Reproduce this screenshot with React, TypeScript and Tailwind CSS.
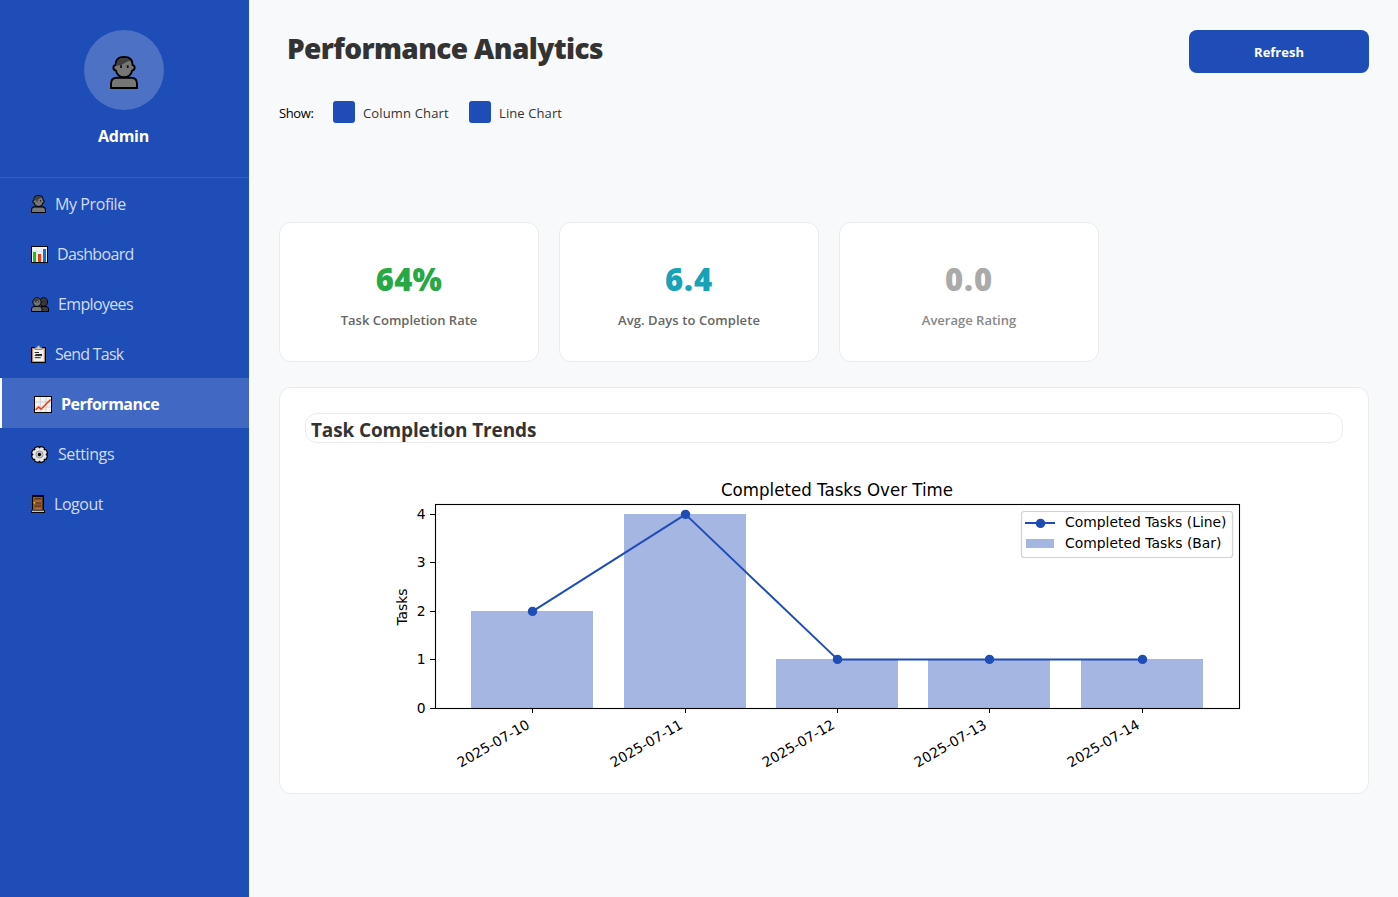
import type { ReactNode } from "react";

function PersonIcon({ className }: { className: string }) {
  return (
    <svg viewBox="0 0 28 33" preserveAspectRatio="none" className={className}>
      <path d="M1 32V27.5Q1 21.8 7 21.8H21Q27 21.8 27 27.5V32Z" fill="#767676" stroke="#000" strokeWidth="1.9" />
      <path d="M5.6 9Q5.6 1 14 1Q22.6 1 22.6 9Q24.6 9.4 24.6 11.8Q24.6 14.2 22.2 14.5Q20.5 21.3 14 21.3Q7.7 21.3 5.8 14.5Q3.4 14.2 3.4 11.8Q3.4 9.4 5.6 9Z" fill="#767676" stroke="#000" strokeWidth="1.9" />
      <path d="M6.5 9.5Q6.3 2 14 2Q18.5 2 20.5 4.6Q16.5 5.5 14 7.6Q11.5 9.8 6.5 9.5Z" fill="#3f3f3f" />
      <path d="M11 9.3V12M17.7 9.3V12" stroke="#111" strokeWidth="1.8" />
    </svg>
  );
}

function ChartBarIcon() {
  return (
    <svg viewBox="0 0 17 17" className="h-[17px] w-[17px]">
      <rect x=".5" y=".5" width="16" height="16" fill="#f3f3f3" stroke="#000" />
      <path d="M1 5.5H16M1 10.5H16M5.7 1V16M11 1V16" stroke="#dedede" strokeWidth=".7" />
      <rect x="2" y="6" width="3" height="10" fill="#16c60c" />
      <rect x="7" y="8" width="3" height="8" fill="#f03a17" />
      <rect x="12" y="3" width="3" height="13" fill="#0078d7" />
    </svg>
  );
}

function PeopleIcon() {
  return (
    <svg viewBox="0 0 18 15" className="h-[15px] w-[18px]">
      <path d="M9 14.5V10.8Q9 9.5 11 9.5H15Q17.5 9.5 17.5 12V14.5Z" fill="#3b3b3b" stroke="#000" />
      <ellipse cx="12.6" cy="4.9" rx="4" ry="4.3" fill="#3b3b3b" stroke="#000" />
      <path d="M.5 14.5V12Q.5 9.6 3 9.6H8.5Q11 9.6 11 12V14.5Z" fill="#767676" stroke="#000" />
      <ellipse cx="6" cy="5" rx="4.1" ry="4.4" fill="#767676" stroke="#000" />
      <path d="M2.4 4.2Q3 1 6 1Q8.5 1 9.3 3Q6 3.6 5.5 4.4Z" fill="#3f3f3f" />
      <path d="M4.8 4.5V5.7M7.6 4.5V5.7M12 4.5V5.7M14.5 4.5V5.7" stroke="#111" strokeWidth=".8" />
    </svg>
  );
}

function ClipboardIcon() {
  return (
    <svg viewBox="0 0 15 18" className="h-[18px] w-[15px]">
      <rect x=".5" y="2.5" width="14" height="15" fill="#b98a5e" stroke="#000" />
      <rect x="2.2" y="4" width="10.6" height="12.2" fill="#f2f2f2" />
      <path d="M4 4.5V2.5H5.8Q6 .6 7.5 .6Q9 .6 9.2 2.5H11V4.5Z" fill="#ccc" stroke="#777" strokeWidth=".8" />
      <path d="M3.8 7.5H8M4.5 9.5H11M3.8 10.6H11M3.8 12.7H9.8" stroke="#222" strokeWidth="1" />
    </svg>
  );
}

function TrendIcon() {
  return (
    <svg viewBox="0 0 18 17" className="h-[17px] w-[18px]">
      <rect x=".5" y=".5" width="17" height="16" fill="#f3f3f3" stroke="#000" />
      <path d="M1 6H17M1 11H17M6.3 1V16M12 1V16" stroke="#cfcfcf" strokeWidth=".9" />
      <path d="M1.6 13.8L4.6 11L7 13.2L16.6 3.5" fill="none" stroke="#f03a17" strokeWidth="1.6" />
    </svg>
  );
}

function GearIcon() {
  const teeth = [0, 45, 90, 135];
  return (
    <svg viewBox="0 0 17 17" className="h-[17px] w-[17px]">
      {teeth.map((a) => (
        <rect key={a} x="5.6" y="0" width="5.8" height="17" rx="1.4" fill="#000" transform={`rotate(${a + 22.5} 8.5 8.5)`} />
      ))}
      {teeth.map((a) => (
        <rect key={a} x="6.7" y="1.1" width="3.6" height="14.8" rx=".7" fill="#e8e8e8" transform={`rotate(${a + 22.5} 8.5 8.5)`} />
      ))}
      <circle cx="8.5" cy="8.5" r="6.2" fill="#e8e8e8" />
      <circle cx="8.5" cy="8.5" r="3.6" fill="#c4c4c4" stroke="#8c8c8c" strokeWidth=".8" />
      <circle cx="8.5" cy="8.5" r="1.7" fill="#000" />
    </svg>
  );
}

function DoorIcon() {
  return (
    <svg viewBox="0 0 14 18" className="h-[18px] w-[14px]">
      <path d="M1 0H13V18H1Z" fill="#000" />
      <rect x="2" y="2" width="9.6" height="13.5" fill="#8e562e" />
      <path d="M4 3.7H10M4 8H10M4 11H10" stroke="#5a3317" strokeWidth="1.2" />
      <path d="M4 6H10M4 13.4H10" stroke="#b97b4c" strokeWidth=".8" />
      <circle cx="3.4" cy="7.8" r=".9" fill="#f7c331" />
      <rect x="0" y="15" width="14" height="3" fill="#000" />
      <rect x=".8" y="15.6" width="12.2" height="1.4" fill="#c4c4c4" />
    </svg>
  );
}

type Item = { label: string; icon: ReactNode; gap: string; active?: boolean; tracking: string };

const items: Item[] = [
  { label: "My Profile", icon: <PersonIcon className="h-[18px] w-[15px]" />, gap: "gap-[9px]", tracking: "tracking-[-0.4px]" },
  { label: "Dashboard", icon: <ChartBarIcon />, gap: "gap-[9px]", tracking: "tracking-[-0.65px]" },
  { label: "Employees", icon: <PeopleIcon />, gap: "gap-[9px]", tracking: "tracking-[-0.65px]" },
  { label: "Send Task", icon: <ClipboardIcon />, gap: "gap-[9px]", tracking: "tracking-[-0.75px]" },
  { label: "Performance", icon: <TrendIcon />, gap: "gap-[9px]", active: true, tracking: "tracking-[-0.5px]" },
  { label: "Settings", icon: <GearIcon />, gap: "gap-[10px]", tracking: "tracking-[-0.4px]" },
  { label: "Logout", icon: <DoorIcon />, gap: "gap-[9px]", tracking: "tracking-[-0.45px]" },
];

function Sidebar() {
  return (
    <aside className="flex w-[249px] shrink-0 flex-col bg-[#1f4db7] text-white">
      <div className="flex h-[178px] flex-col items-center border-b border-[#3560be] pt-[30px] pr-[2px]">
        <div className="flex h-20 w-20 items-center justify-center rounded-full bg-[#4c71c5] pt-[5px]">
          <PersonIcon className="h-[33px] w-[28px]" />
        </div>
        <div className="mt-[14px] text-[16px] leading-6 font-bold tracking-[-0.3px]">Admin</div>
      </div>
      <nav className="flex flex-col">
        {items.map((it) => (
          <a
            key={it.label}
            className={
              it.active
                ? `flex h-[50px] items-center border-l-2 border-white bg-[#4168c2] pt-[2px] pl-8 text-[16px] font-bold text-white ${it.gap}`
                : `flex h-[50px] items-center pt-[2px] pl-[31px] text-[16px] text-[#d2dbf1] ${it.gap}`
            }
          >
            {it.icon}
            <span className={it.tracking}>{it.label}</span>
          </a>
        ))}
      </nav>
    </aside>
  );
}

const stats = [
  { value: "64%", label: "Task Completion Rate", valueColor: "text-[#28a745] tracking-[0.2px]", labelColor: "text-[#666666]" },
  { value: "6.4", label: "Avg. Days to Complete", valueColor: "text-[#17a2b8] tracking-[0.9px]", labelColor: "text-[#666666] tracking-[0.08px]" },
  { value: "0.0", label: "Average Rating", valueColor: "text-[#aaaaaa] tracking-[0.9px]", labelColor: "text-[#888888]" },
];

const points = [
  { date: "2025-07-10", x: 532.5, left: 471, y: 611 },
  { date: "2025-07-11", x: 685.5, left: 624, y: 514 },
  { date: "2025-07-12", x: 837.5, left: 776, y: 659 },
  { date: "2025-07-13", x: 989.5, left: 928, y: 659 },
  { date: "2025-07-14", x: 1142.5, left: 1081, y: 659 },
];

const yTicks = [708.5, 659.5, 611.5, 562.5, 514.5];

function TrendChart() {
  return (
    <svg viewBox="305 463 1038 305" className="mt-5 h-[305px] w-[1038px] overflow-visible font-['DejaVu_Sans',sans-serif] text-[13.89px]">
      <text x="721" y="495.6" className="text-[17.2px]" textLength="232" lengthAdjust="spacingAndGlyphs">Completed Tasks Over Time</text>
      {points.map((p) => (
        <rect key={p.date} x={p.left} y={p.y} width="122" height={708 - p.y} fill="#a6b6e2" />
      ))}
      {yTicks.map((y, i) => (
        <g key={y}>
          <path d={`M430 ${y}H435`} stroke="#000" />
          <text x="425.5" y={y + 4.4} textAnchor="end">{i}</text>
        </g>
      ))}
      {points.map((p) => (
        <g key={p.date}>
          <path d={`M${p.x} 708V713`} stroke="#000" />
          <text textAnchor="end" transform={`translate(${p.x - 1.8} 727.5) rotate(-30)`}>{p.date}</text>
        </g>
      ))}
      <text textAnchor="middle" transform="translate(407 607) rotate(-90)">Tasks</text>
      <polyline points={points.map((p) => `${p.x},${p.y + 0.4}`).join(" ")} fill="none" stroke="#1f4db7" strokeWidth="2" strokeLinejoin="round" />
      {points.map((p) => (
        <circle key={p.date} cx={p.x} cy={p.y + 0.4} r="4.7" fill="#1f4db7" />
      ))}
      <rect x="435.5" y="504.5" width="804" height="204" fill="none" stroke="#000" strokeWidth="1.1" />
      <rect x="1021.5" y="511.5" width="211" height="46" rx="2.8" fill="#fff" stroke="#d2d2d2" strokeWidth="1.2" />
      <path d="M1025 523H1055" stroke="#1f4db7" strokeWidth="2" />
      <circle cx="1040.5" cy="523.4" r="4.7" fill="#1f4db7" />
      <rect x="1026" y="539" width="28" height="9" fill="#a6b6e2" />
      <text x="1065" y="527" textLength="161.5">Completed Tasks (Line)</text>
      <text x="1065" y="548" textLength="156.5">Completed Tasks (Bar)</text>
    </svg>
  );
}

export default function App() {
  return (
    <div className="flex h-[897px] w-[1398px] overflow-hidden bg-[#f8f9fb] font-['Open_Sans','Noto_Sans',sans-serif]">
      <Sidebar />
      <main className="flex flex-1 flex-col px-[30px] pt-[30px]">
        <header className="flex h-[43px] w-[1090px] items-start justify-between">
          <h1 className="pl-2 text-[28px] leading-[37px] font-extrabold tracking-[-0.62px] whitespace-nowrap text-[#333]">Performance Analytics</h1>
          <button className="h-[43px] w-[180px] rounded-lg bg-[#1f4db7] pt-[2px] text-[13px] font-bold text-white">Refresh</button>
        </header>
        <div className="mt-7 flex h-[22px] items-center text-[13px]">
          <span className="w-[54px] pt-[3px] tracking-[-0.4px] text-black">Show:</span>
          <span className="h-[22px] w-[22px] rounded-[3px] bg-[#1f4db7]" />
          <span className="ml-2 w-[106px] pt-[3px] tracking-[0.15px] text-[#333]">Column Chart</span>
          <span className="h-[22px] w-[22px] rounded-[3px] bg-[#1f4db7]" />
          <span className="ml-2 pt-[3px] tracking-[0.1px] text-[#333]">Line Chart</span>
        </div>
        <section className="mt-[99px] flex gap-5">
          {stats.map((s) => (
            <div key={s.label} className="flex h-[140px] w-[260px] flex-col items-center rounded-xl border border-[#e9ecef] bg-white pt-[36px]">
              <div className={`text-[31px] leading-[40px] font-extrabold ${s.valueColor}`}>{s.value}</div>
              <div className={`mt-[11px] text-[13px] leading-5 font-semibold ${s.labelColor}`}>{s.label}</div>
            </div>
          ))}
        </section>
        <section className="mt-[25px] h-[407px] w-[1090px] rounded-xl border border-[#e9ecef] bg-white p-[25px]">
          <div className="h-[30px] rounded-xl border border-[#e9ecef] pl-[5px]">
            <h2 className="text-[19px] leading-[32px] font-bold tracking-[-0.14px] text-[#333]">Task Completion Trends</h2>
          </div>
          <TrendChart />
        </section>
      </main>
    </div>
  );
}
